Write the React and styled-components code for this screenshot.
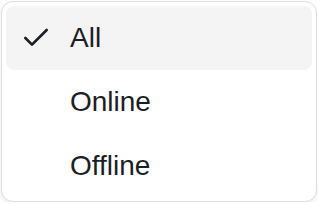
import React from 'react';
import styled, { createGlobalStyle } from 'styled-components';
import { Check } from 'lucide-react';

const Global = createGlobalStyle`
  body {
    margin: 0;
    background: #ffffff;
    font-family: "Liberation Sans", Arial, sans-serif;
  }
`;

const Menu = styled.div`
  box-sizing: border-box;
  margin: 1px 0 0 1px;
  width: 316px;
  padding: 4px 4px 3px;
  background: #ffffff;
  border: 1px solid #dedede;
  border-radius: 12px;
  box-shadow: 0 2px 4px rgba(0, 0, 0, 0.08);
  display: flex;
  flex-direction: column;
`;

const Item = styled.div`
  display: flex;
  align-items: center;
  height: 64px;
  padding-left: 14px;
  border-radius: 8px;
  background: ${p => (p.$active ? '#f4f4f4' : 'transparent')};
  color: #1b1e24;
  font-size: 28px;
  line-height: 1;
`;

const IconSlot = styled.span`
  display: flex;
  width: 32px;
  height: 32px;
  margin-right: 18px;
  color: #1b1e24;
`;

const options = ['All', 'Online', 'Offline'];

export default function App() {
  const selected = 'All';
  return (
    <>
      <Global />
      <Menu>
        {options.map(o => (
          <Item key={o} $active={o === selected}>
            <IconSlot>{o === selected && <Check size={32} strokeWidth={2} />}</IconSlot>
            {o}
          </Item>
        ))}
      </Menu>
    </>
  );
}
